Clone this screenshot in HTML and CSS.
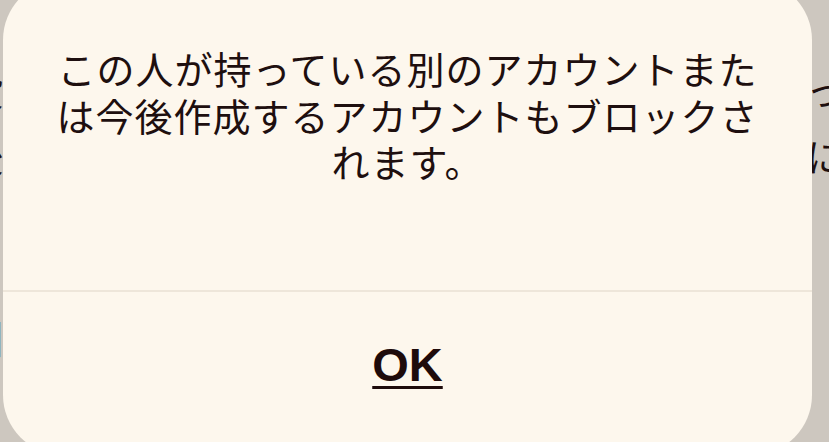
FILE: index.html
```html
<!DOCTYPE html>
<html lang="ja">
<head>
    <title>ブロック</title>
    <meta charset="utf-8">
    <link rel="stylesheet" href="styles.css">
</head>
<body>
<div class="page">
    <div class="row"><span class="left">設</span><span class="right">っさ</span></div>
    <div class="row"><span class="left">後</span><span class="right">にさ</span></div>
    <div class="row strong"><span class="left">国</span><span class="right"></span></div>
</div>

<div class="dialog">
    <p class="message">この人が持っている別のアカウントまた<br>は今後作成するアカウントもブロックさ<br>れます。</p>
    <div class="footer">
        <a class="ok" href="#">OK</a>
    </div>
</div>
</body>
</html>
```

FILE: styles.css
```css
body {
    margin: 0;
    height: 442px;
    overflow: hidden;
    background-color: #cdc7bf;
    color: #1e0f0f;
    font-family: "Noto Sans CJK JP", sans-serif;
}

.page {
    padding-top: 56px;
}

.row {
    display: flex;
    margin-left: -35px;
    margin-right: -43px;
    font-size: 38px;
    line-height: 66px;
    color: #1e0f0f;
}

.row.strong {
    margin-top: 116px;
    font-weight: 700;
}

.row .left {
    width: 38px;
}

.row .right {
    margin-left: auto;
    width: 66px;
    white-space: nowrap;
}

.dialog {
    position: absolute;
    left: 3px;
    top: -20px;
    width: 809px;
    height: 475px;
    display: flex;
    flex-direction: column;
    background-color: #fdf7ed;
    border-radius: 60px;
}

.message {
    margin: 0;
    padding: 65px 0 105px;
    font-size: 38px;
    line-height: 46.5px;
    letter-spacing: 1px;
    text-align: center;
}

.footer {
    flex: 1;
    border-top: 2px solid #eee6da;
    text-align: center;
    padding-top: 46px;
}

.ok {
    font-family: "Liberation Sans", Arial, sans-serif;
    font-size: 47px;
    font-weight: 700;
    line-height: 54px;
    color: #1e0b0b;
    text-decoration: underline;
    text-decoration-thickness: 3px;
    text-underline-offset: 5px;
}
```
